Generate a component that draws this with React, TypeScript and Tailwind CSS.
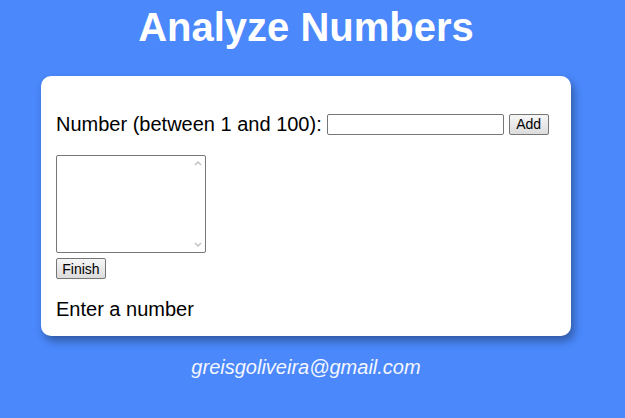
import React, { useState } from 'react';

const App: React.FC = () => {
  const [value, setValue] = useState('');
  const [list, setList] = useState('');

  return (
    <div className="min-h-screen w-full bg-[#4a88fb] font-['Liberation_Sans',Arial,sans-serif]">
      <div className="w-[612px] flex flex-col items-center">
        <h1 className="text-[40px] leading-[46px] font-bold text-white pt-[4px] h-[76px]">Analyze Numbers</h1>
        {/* Card */}
        <div className="w-[530px] bg-white rounded-[10px] shadow-[3px_5px_8px_rgba(0,0,0,0.35)] pt-[36px] pb-[15px] px-[15px]">
          <div className="flex items-center h-[24px] text-[20px] text-black">
            <label htmlFor="num">Number (between 1 and 100):</label>
            <input
              id="num"
              type="number"
              value={value}
              onChange={(e) => setValue(e.target.value)}
              className="ml-[5px] w-[177px] h-[21px] border border-[#767676] rounded-[2px] text-[13.33px] px-1 outline-none [appearance:textfield]"
            />
            <button className="ml-[5px] w-[40px] h-[21px] text-[14px] leading-none border border-[#767676] rounded-[2px] bg-gradient-to-b from-[#f6f6f6] to-[#dcdcdc]">
              Add
            </button>
          </div>
          <div className="mt-[19px] relative w-[150px] h-[98px]">
            <textarea
              value={list}
              onChange={(e) => setList(e.target.value)}
              className="w-[150px] h-[98px] border border-[#767676] rounded-[2px] resize-none outline-none block"
            />
            <svg className="absolute right-[4px] top-[5px]" width="8" height="6" viewBox="0 0 8 6">
              <path d="M1 5 L4 2 L7 5" fill="none" stroke="#c2c2c2" strokeWidth="1.5" />
            </svg>
            <svg className="absolute right-[4px] bottom-[5px]" width="8" height="6" viewBox="0 0 8 6">
              <path d="M1 1 L4 4 L7 1" fill="none" stroke="#c2c2c2" strokeWidth="1.5" />
            </svg>
          </div>
          <button className="block mt-[5px] w-[50px] h-[21px] text-[14px] leading-none border border-[#767676] rounded-[2px] bg-gradient-to-b from-[#f6f6f6] to-[#dcdcdc]">
            Finish
          </button>
          <p className="mt-[19px] text-[20px] leading-[23px] text-black">Enter a number</p>
        </div>
        <p className="mt-[16px] text-[20px] italic text-[#f4f6ff]">greisgoliveira@gmail.com</p>
      </div>
    </div>
  );
};

export default App;
